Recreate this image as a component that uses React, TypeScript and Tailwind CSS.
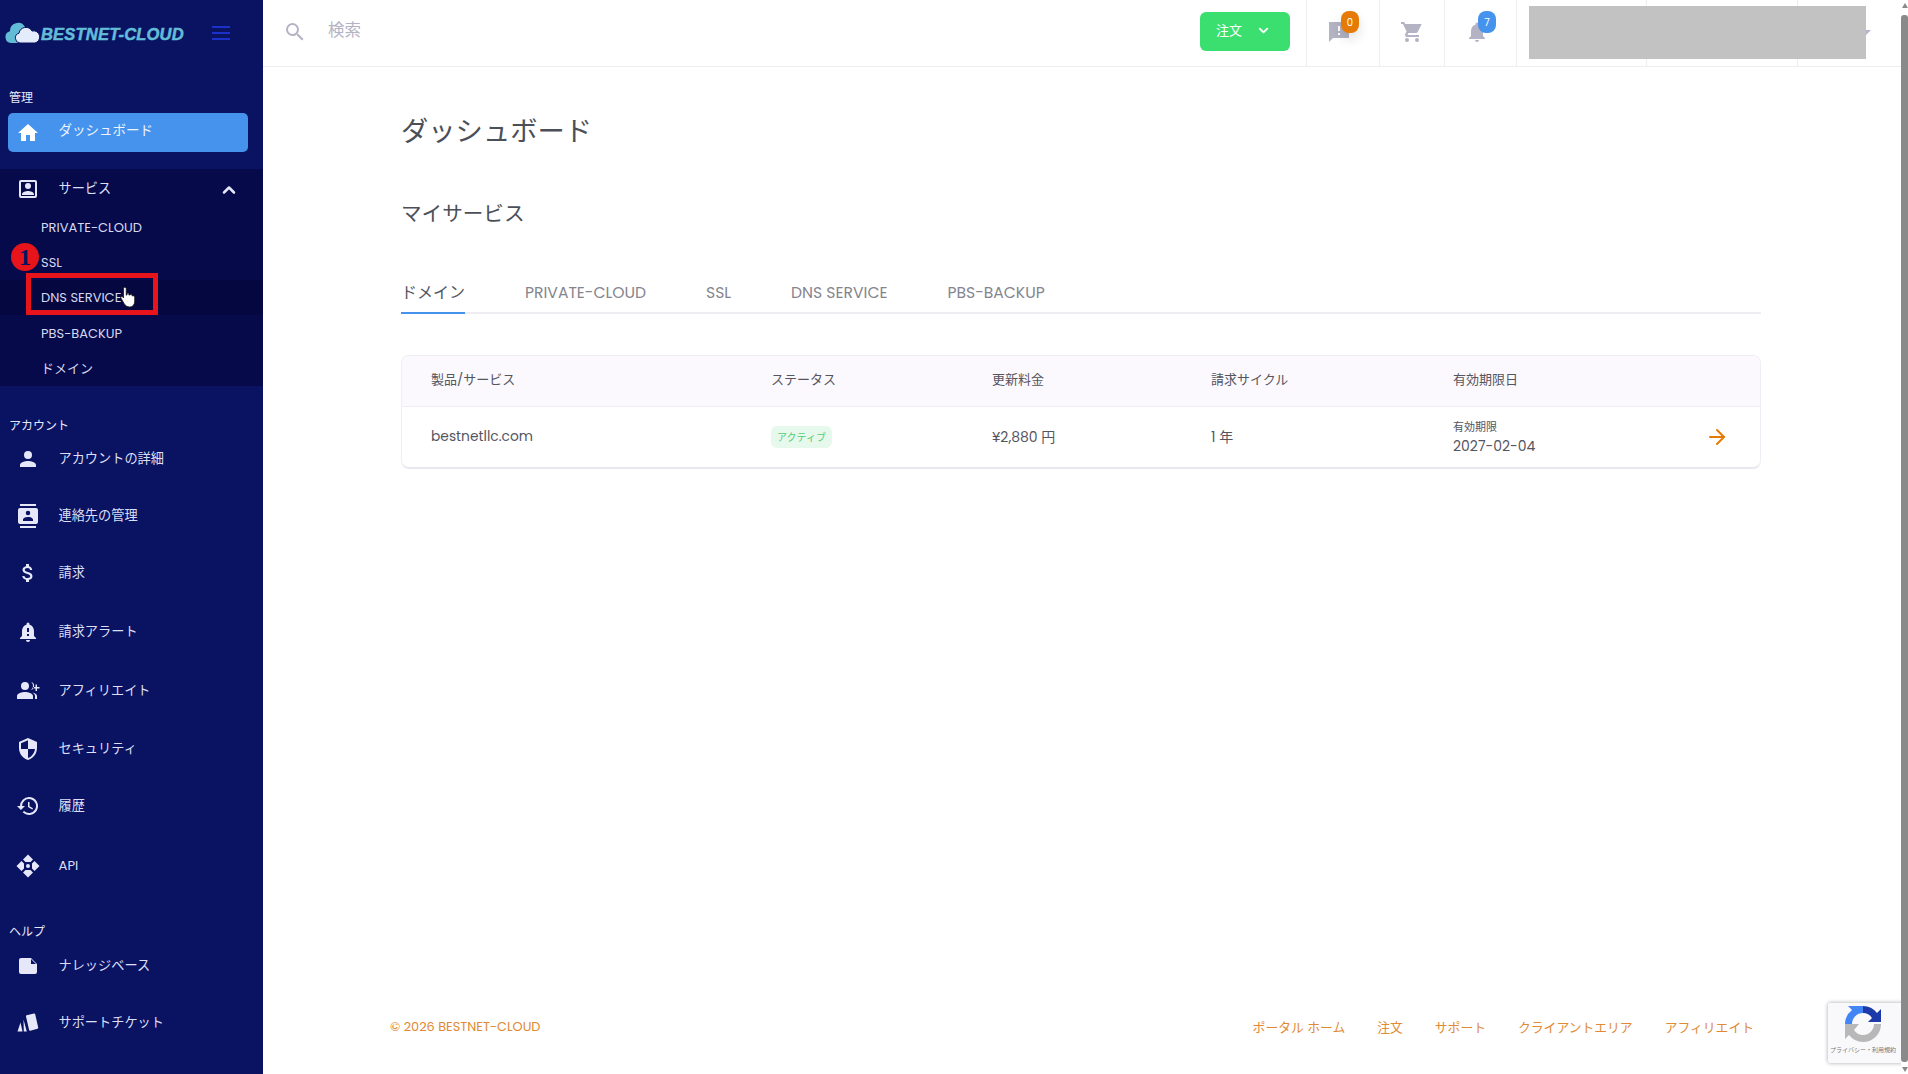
import { ChevronDown, ChevronUp, ArrowRight } from "lucide-react";

const fontCls = "font-['Poppins','Lato','Noto_Sans_CJK_JP',sans-serif]";

// small filled icons for the sidebar, all on a 24 box
const paths: Record<string, string> = {
  home: "M10 20v-6h4v6h5v-8h3L12 3 2 12h3v8z",
  service: "M3 5v14a2 2 0 0 0 2 2h14a2 2 0 0 0 2-2V5a2 2 0 0 0-2-2H5a2 2 0 0 0-2 2zm16 14H5V5h14v14zM12 12a3 3 0 1 0 0-6 3 3 0 0 0 0 6zm6 5c0-2-4-3.1-6-3.1S6 15 6 17v1h12v-1z",
  person: "M12 12a4 4 0 1 0 0-8 4 4 0 0 0 0 8zm0 2c-2.7 0-8 1.3-8 4v2h16v-2c0-2.700-5.300-4-8-4z",
  contacts: "M20 0H4v2h16V0zM4 24h16v-2H4v2zM20 4H4a2 2 0 0 0-2 2v12a2 2 0 0 0 2 2h16a2 2 0 0 0 2-2V6a2 2 0 0 0-2-2zm-8 2.750a2.250 2.250 0 1 1 0 4.500 2.250 2.250 0 0 1 0-4.500zM17 17H7v-1.500c0-1.700 3.300-2.500 5-2.500s5 .8 5 2.500V17z",
  dollar: "M11.800 10.900c-2.270-.59-3-1.200-3-2.150 0-1.090 1.010-1.850 2.700-1.850 1.780 0 2.440.85 2.500 2.100h2.210c-.07-1.720-1.120-3.300-3.210-3.810V3h-3v2.160c-1.940.42-3.500 1.680-3.500 3.610 0 2.310 1.910 3.460 4.700 4.130 2.500.6 3 1.480 3 2.410 0 .69-.49 1.790-2.700 1.790-2.060 0-2.870-.92-2.980-2.100h-2.200c.12 2.190 1.760 3.420 3.680 3.830V21h3v-2.150c1.950-.37 3.500-1.500 3.500-3.550 0-2.840-2.430-3.810-4.700-4.400z",
  alert: "M12 22a2 2 0 0 0 2-2h-4a2 2 0 0 0 2 2zm6-6v-5c0-3.070-1.640-5.640-4.500-6.320V4a1.500 1.500 0 0 0-3 0v.68C7.630 5.360 6 7.920 6 11v5l-2 2v1h16v-1l-2-2zm-5 0h-2v-2h2v2zm0-4h-2V8h2v4z",
  affiliate: "M9 11a4 4 0 1 0 0-8 4 4 0 0 0 0 8zm0 2c-2.700 0-8 1.300-8 4v3h16v-3c0-2.700-5.300-4-8-4zm6-2.100a4 4 0 0 0 0-7.800c1.300 1 2 2.400 2 3.900s-.7 2.900-2 3.900zm1.500 2.500c1.300 1 2.500 2 2.500 3.600v3h2v-3c0-1.900-2.500-3.200-4.500-3.600zM21 8V5.500h-1.500V8H17v1.500h2.500V12H21V9.500h2.500V8z",
  shield: "M12 1 3 5v6c0 5.550 3.840 10.740 9 12 5.160-1.260 9-6.450 9-12V5l-9-4zm0 10.990h7c-.53 4.120-3.280 7.790-7 8.940V12H5V6.300l7-3.110v8.800z",
  history: "M13 3a9 9 0 0 0-9 9H1l3.890 3.890.07.14L9 12H6a7 7 0 1 1 2.050 4.950l-1.420 1.420A9 9 0 1 0 13 3zm-1 5v5l4.280 2.540.72-1.210-3.500-2.080V8H12z",
  api: "M12 .5 17 5.500 14.500 8h-5L7 5.500zM.5 12 5.500 7 8 9.500v5L5.500 17zM23.500 12 18.500 7 16 9.500v5l2.500 2.500zM12 23.500 17 18.500 14.500 16h-5L7 18.500zM12 10a2 2 0 1 0 0 4 2 2 0 0 0 0-4z",
  note: "M3 6a2 2 0 0 1 2-2h10l6 6v8a2 2 0 0 1-2 2H5a2 2 0 0 1-2-2V6zm12-1v5h5l-5-5z",
  cards: "M10 5.500a1 1 0 0 1 .7-1.200L18 2.500a1 1 0 0 1 1.200.7l3 13.300a1 1 0 0 1-.7 1.200L14.300 19.700a1 1 0 0 1-1.200-.7zM7.500 8.500 10.800 20.500H7.800zM4.500 11.500 6.500 20.500H1.500z",
};

function Glyph({ name, size = 24, className = "" }: { name: string; size?: number; className?: string }) {
  return (
    <svg width={size} height={size} viewBox="0 0 24 24" fill="currentColor" fillRule="evenodd" className={className}>
      <path d={paths[name]} />
    </svg>
  );
}

const accountItems = [
  { icon: "person", label: "アカウントの詳細", h: "h-[57px]" },
  { icon: "contacts", label: "連絡先の管理", h: "h-[57px]" },
  { icon: "dollar", label: "請求", h: "h-[58px]" },
  { icon: "alert", label: "請求アラート", h: "h-[60px]" },
  { icon: "affiliate", label: "アフィリエイト", h: "h-[58px]" },
  { icon: "shield", label: "セキュリティ", h: "h-[57px]" },
  { icon: "history", label: "履歴", h: "h-[57px]" },
  { icon: "api", label: "API", h: "h-[63px]" },
];

const helpItems = [
  { icon: "note", label: "ナレッジベース", h: "h-[57px]" },
  { icon: "cards", label: "サポートチケット", h: "h-[57px]" },
];

function NavItem({ icon, label, h }: { icon: string; label: string; h: string }) {
  return (
    <div className={`flex items-center pl-[16px] text-[13.200px] text-[#dcdff5] ${h}`}>
      <Glyph name={icon} size={24} className="text-[#e6e8fa]" />
      <span className="ml-[18.500px]">{label}</span>
    </div>
  );
}

function Sidebar() {
  return (
    <aside className="relative flex h-[1074px] w-[263px] shrink-0 flex-col bg-[#0a1361]">
      <div className="flex h-[66px] items-center pl-[5px]">
        <svg width="36" height="22" viewBox="0 0 36 22" className="shrink-0">
          <path d="M6 21a6 6 0 0 1-1-11.800A8 8 0 0 1 20 5a7 7 0 0 1 7 7v9z" fill="#62bcd6" />
          <path d="M15 21a5 5 0 0 1-1-9.800A7 7 0 0 1 27 9a6 6 0 0 1 3 12z" fill="#e4ebfb" stroke="#0a1361" strokeWidth="1" />
        </svg>
        <span className="mt-[2px] w-[142px] font-['Liberation_Sans'] text-[16.500px] font-bold italic tracking-[0.2px] whitespace-nowrap text-[#63bcd8] [-webkit-text-stroke:0.5px_#63bcd8]">BESTNET-CLOUD</span>
        <div className="ml-[29px] flex flex-col gap-[4px]">
          <div className="h-[2px] w-[18px] bg-[#1c31c9]" />
          <div className="h-[2px] w-[18px] bg-[#1c31c9]" />
          <div className="h-[2px] w-[18px] bg-[#1c31c9]" />
        </div>
      </div>

      <div className="flex h-[47px] items-end pb-[6px] pl-[9px] text-[12px] text-[#e6e8fa]">管理</div>
      <div className="ml-[8px] flex h-[39px] w-[240px] items-center rounded-[5px] bg-[#4593ec] pl-[8px] text-[13.500px] text-[#f0f4fd]">
        <Glyph name="home" size={24} className="text-white" />
        <span className="ml-[18.500px] -mt-[2px]">ダッシュボード</span>
      </div>

      <div className="mt-[17px] flex h-[217px] flex-col bg-[#060a4a]">
        <div className="flex h-[40px] shrink-0 items-center pl-[16px] pr-[24px] text-[13.200px] text-[#dcdff5]">
          <Glyph name="service" size={24} className="text-[#e6e8fa]" />
          <span className="ml-[18.500px]">サービス</span>
          <ChevronUp size={20} strokeWidth={3} className="ml-auto mt-[2px] text-[#e6e8fa]" />
        </div>
        {["PRIVATE-CLOUD", "SSL", "DNS SERVICE", "PBS-BACKUP", "ドメイン"].map((s) => (
          <div key={s} className={`flex h-[35.300px] items-center pl-[41px] pt-[2px] text-[13px] text-[#d5d8f0] ${s === "DNS SERVICE" ? "bg-[#050840]" : ""}`}>{s}</div>
        ))}
      </div>

      <div className="flex h-[52px] items-end pb-[3px] pl-[9px] text-[12px] text-[#e6e8fa]">アカウント</div>
      <div className="-mt-[8px] flex flex-col">
        {accountItems.map((it) => <NavItem key={it.label} {...it} />)}
      </div>
      <div className="flex h-[47px] items-end pb-[3px] pl-[9px] text-[12px] text-[#e6e8fa]">ヘルプ</div>
      <div className="-mt-[7px] flex flex-col">
        {helpItems.map((it) => <NavItem key={it.label} {...it} />)}
      </div>

      {/* annotation drawn over the menu */}
      <div className="absolute left-[26px] top-[273px] h-[42px] w-[132px] border-[5px] border-[#e8141c]" />
      <div className="absolute left-[11px] top-[243px] flex h-[28px] w-[28px] items-center justify-center rounded-full bg-[#e8141c] font-['Liberation_Serif'] text-[24px] font-bold leading-none text-[#0a1361]">1</div>
      <svg width="16" height="24" viewBox="0 0 18 24" className="absolute left-[120px] top-[285px]">
        <path d="M4 2.500a1.500 1.500 0 0 1 3 0V10l1-.5V7.500l2 .3v2l1.500-.1v-1l2 .5v1.500l1.500 0c1 0 1.500.8 1.500 2v4c0 3.500-2 6.500-5.500 6.500-3 0-5-1.500-6.500-4L1 13c-.6-1 .7-2.200 1.700-1.300L4 13z" fill="#ffffff" stroke="#0a0a0a" strokeWidth="0.8" />
      </svg>
    </aside>
  );
}

function Topbar() {
  return (
    <header className="relative flex h-[67px] shrink-0 items-stretch border-b border-[#eeeef2]">
      <div className="flex flex-1 items-center pb-[3px] pl-[20px]">
        <svg width="24" height="24" viewBox="0 0 24 24" fill="#b4b3c4">
          <path d="M15.500 14h-.79l-.28-.27A6.470 6.470 0 0 0 16 9.500 6.500 6.500 0 1 0 9.500 16c1.610 0 3.090-.59 4.230-1.570l.27.28v.79l5 4.990L20.490 19l-4.990-5zm-6 0a4.500 4.500 0 1 1 0-9 4.500 4.500 0 0 1 0 9z" />
        </svg>
        <span className="ml-[21px] text-[16.500px] text-[#b4b3c4]">検索</span>
      </div>
      <div className="flex items-center pb-[3px] pr-[16px]">
        <div className="flex h-[39px] w-[90px] items-center rounded-[6px] bg-[#3bdf70] pb-[2px] pl-[16px] text-[13px] text-white">
          注文
          <ChevronDown size={15} strokeWidth={3} className="ml-[14px]" />
        </div>
      </div>
      <div className="relative flex w-[73px] items-center justify-center border-l border-[#eeeef2] pb-[3px] pr-[9px]">
        <svg width="24" height="24" viewBox="0 0 24 24" fill="#b4b3c4">
          <path d="M22 2H2v20l4-4h16V2zm-9 9h-2V6h2v5zm0 4h-2v-2h2v2z" fillRule="evenodd" />
        </svg>
        <span className="absolute left-[34px] top-[11px] flex h-[22px] w-[18px] items-center justify-center rounded-[8px] bg-[#e67a07] text-[10px] text-white shadow-[0_6px_12px_rgba(0,0,0,0.12)]">0</span>
      </div>
      <div className="flex w-[65px] items-center justify-center border-l border-[#eeeef2] pb-[3px]">
        <svg width="24" height="24" viewBox="0 0 24 24" fill="#b4b3c4">
          <path d="M7 18a2 2 0 1 0 0 4 2 2 0 0 0 0-4zm10 0a2 2 0 1 0 0 4 2 2 0 0 0 0-4zM1 2v2h2l3.600 7.590-1.350 2.450A2 2 0 0 0 7 17h12v-2H7.420l1.100-2h7.450c.75 0 1.410-.41 1.750-1.030L21.700 4H5.210l-.94-2H1z" />
        </svg>
      </div>
      <div className="relative flex w-[72px] items-center justify-center border-l border-[#eeeef2] pb-[3px] pr-[8px]">
        <svg width="24" height="24" viewBox="0 0 24 24" fill="#b4b3c4">
          <path d="M12 22a2 2 0 0 0 2-2h-4a2 2 0 0 0 2 2zm6-6v-5c0-3.070-1.640-5.640-4.500-6.320V4a1.500 1.500 0 0 0-3 0v.68C7.630 5.360 6 7.920 6 11v5l-2 2v1h16v-1l-2-2z" />
        </svg>
        <span className="absolute left-[33px] top-[11px] flex h-[22px] w-[18px] items-center justify-center rounded-[8px] bg-[#4593ec] text-[10px] text-white">7</span>
      </div>
      <div className="w-[130px] border-l border-[#eeeef2]" />
      <div className="w-[151px] border-l border-[#eeeef2]" />
      <div className="w-[111px] border-l border-[#eeeef2]" />

      {/* grey block over the account name */}
      <div className="absolute left-[1598px] top-[30px] h-0 w-0 border-x-[5px] border-t-[5px] border-x-transparent border-t-[#b4b3d0]" />
      <div className="absolute left-[1266px] top-[6px] h-[53px] w-[337px] bg-[#c2c2c2]" />
    </header>
  );
}

const tabs = ["ドメイン", "PRIVATE-CLOUD", "SSL", "DNS SERVICE", "PBS-BACKUP"];

function ServiceTable() {
  return (
    <div className="mt-[41px] w-[1360px] overflow-hidden rounded-[8px] border border-[#eeeef4] border-b-[2px] border-b-[#e8e8ee] text-[#55555f]">
      <div className="grid h-[51px] grid-cols-[340px_221px_219px_242px_1fr] items-center border-b border-[#eeeef4] bg-[#fbf9fd] pb-[3px] pl-[29px] text-[13px]">
        <span>製品/サービス</span>
        <span>ステータス</span>
        <span>更新料金</span>
        <span>請求サイクル</span>
        <span>有効期限日</span>
      </div>
      <div className="grid h-[60px] grid-cols-[340px_221px_219px_242px_1fr] items-center pl-[29px] text-[14px]">
        <span className="text-[13.800px]">bestnetllc.com</span>
        <span className="flex h-[22px] w-[61px] items-center justify-center rounded-[6px] bg-[#e7f8ec] text-[10px] text-[#4fcf77]">アクティブ</span>
        <span>¥2,880 円</span>
        <span>1 年</span>
        <div className="flex items-center pr-[31px]">
          <div className="flex flex-col pt-[2px]">
            <span className="text-[11px] leading-[16px]">有効期限</span>
            <span className="text-[14px] leading-[22px]">2027-02-04</span>
          </div>
          <ArrowRight size={24} strokeWidth={2} className="ml-auto text-[#e67a07]" />
        </div>
      </div>
    </div>
  );
}

function Footer() {
  return (
    <footer className="mt-auto flex h-[57px] items-start justify-between pl-[127px] pr-[154px] text-[12.900px] text-[#e08a35]">
      <span>© 2026 BESTNET-CLOUD</span>
      <div className="flex gap-[32px] pt-[1px] text-[12.800px]">
        {["ポータル ホーム", "注文", "サポート", "クライアントエリア", "アフィリエイト"].map((f) => (
          <span key={f}>{f}</span>
        ))}
      </div>
    </footer>
  );
}

export default function App() {
  return (
    <div className={`relative flex h-[1074px] w-[1908px] overflow-hidden bg-white ${fontCls}`}>
      <Sidebar />
      <div className="flex min-w-0 flex-1 flex-col">
        <Topbar />
        <main className="flex flex-1 flex-col pl-[138px]">
          <h1 className="mt-[46px] text-[27.300px] leading-[38px] text-[#4b4f58]">ダッシュボード</h1>
          <h2 className="mt-[48px] text-[20.600px] leading-[30px] text-[#4b4f58]">マイサービス</h2>
          <div className="mt-[51px] flex w-[1360px] gap-[60px] border-b-[2px] border-[#eeeef2] text-[15.600px] text-[#85858f]">
            {tabs.map((t, i) => (
              <span key={t} className={i === 0 ? "-mb-[2px] h-[34px] w-[64px] border-b-[2px] border-[#4593ec] text-[16px] leading-[26px] text-[#55555f]" : "h-[32px] leading-[26px]"}>{t}</span>
            ))}
          </div>
          <ServiceTable />
        </main>
        <Footer />
      </div>

      {/* recaptcha badge */}
      <div className="absolute bottom-[11px] right-0 flex h-[60px] w-[80px] flex-col items-center rounded-l-[2px] bg-[#f9f9fb] pr-[10px] pt-[2px] shadow-[0_0_4px_rgba(0,0,0,0.35)]">
        <svg width="38" height="38" viewBox="0 0 38 38">
          <path d="M19 1a18 18 0 0 1 14 7l4-4v13H24l4-4a11 11 0 0 0-9-5z" fill="#1c3aa9" />
          <path d="M1 19a18 18 0 0 1 7-14L4 1h15v7a11 11 0 0 0-11 11z" fill="#4285f4" />
          <path d="M19 37a18 18 0 0 1-14-7l-4 4V19h14l-5 6a11 11 0 0 0 9 5 11 11 0 0 0 11-11h7a18 18 0 0 1-18 18z" fill="#b8b8b8" />
        </svg>
        <span className="mt-[3px] whitespace-nowrap text-[6px] leading-[8px] text-[#777]">プライバシー・利用規約</span>
      </div>

      {/* browser scrollbar */}
      <div className="absolute right-0 top-0 flex h-[1074px] w-[7px] flex-col items-center bg-white">
        <div className="mt-[3px] h-0 w-0 border-x-[3px] border-b-[5px] border-x-transparent border-b-[#8a8a8a]" />
        <div className="mt-[7px] h-[1047px] w-[7px] rounded-[3px] bg-[#8a8a8a]" />
        <div className="mt-[5px] h-0 w-0 border-x-[3px] border-t-[5px] border-x-transparent border-t-[#8a8a8a]" />
      </div>
    </div>
  );
}
